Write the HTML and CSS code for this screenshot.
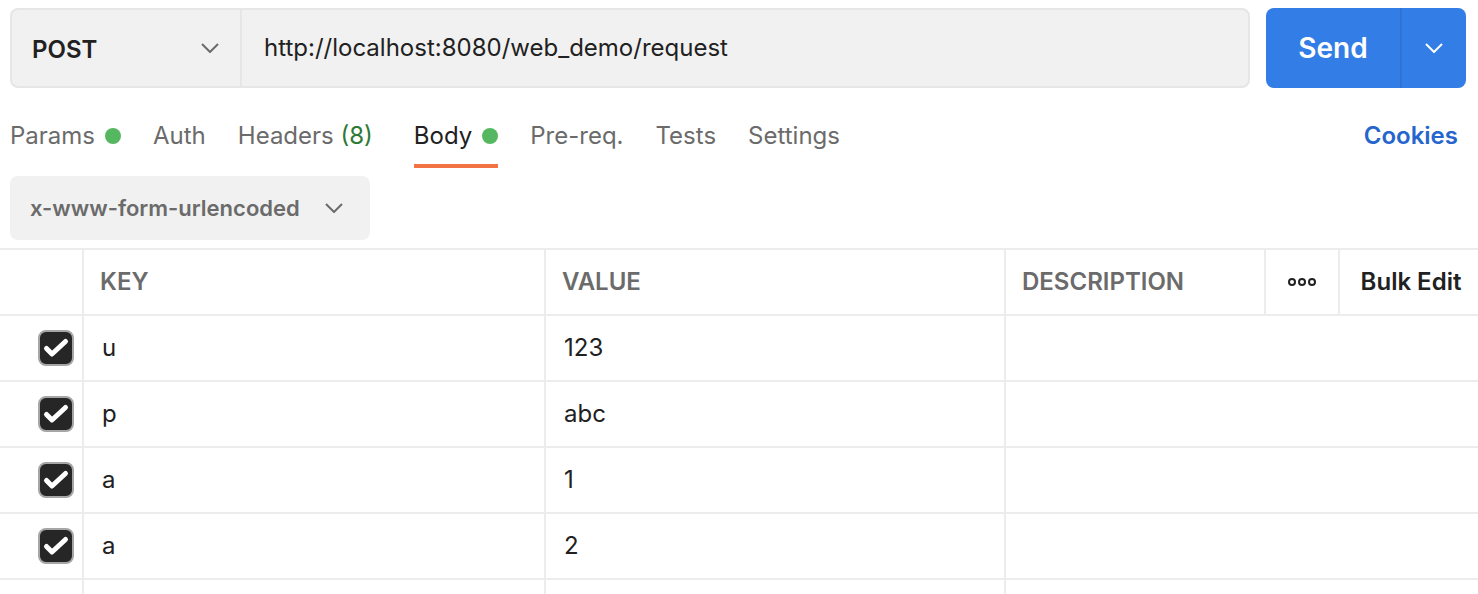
FILE: index.html
```html
<!DOCTYPE html>
<html lang="en">
<head>
<meta charset="utf-8">
<title>Request</title>
<link rel="stylesheet" href="styles.css">
</head>
<body>
<form class="url-bar">
  <div class="url-box">
    <div class="method">
      <select class="method-select" aria-label="Method"><option>POST</option><option>GET</option></select>
      <svg class="chevron" viewBox="0 0 18 10" aria-hidden="true"><path d="M1 1l8 8 8-8"/></svg>
    </div>
    <input class="url-input" type="text" aria-label="Request URL" value="http://localhost:8080/web_demo/request">
  </div>
  <div class="send-group">
    <button class="send" type="button">Send</button>
    <button class="send-more" type="button" aria-label="More send options"><svg class="chevron-light" viewBox="0 0 18 10" aria-hidden="true"><path d="M1 1l8 8 8-8"/></svg></button>
  </div>
</form>
<nav class="tabs">
  <button class="tab" type="button">Params<span class="dot"></span></button>
  <button class="tab" type="button">Auth</button>
  <button class="tab tab-headers" type="button">Headers <span class="count">(8)</span></button>
  <button class="tab tab-active" type="button">Body<span class="dot"></span></button>
  <button class="tab" type="button">Pre-req.</button>
  <button class="tab" type="button">Tests</button>
  <button class="tab" type="button">Settings</button>
  <a class="cookies" href="#">Cookies</a>
</nav>
<div class="body-type">
  <select class="type-select" aria-label="Body type"><option>x-www-form-urlencoded</option><option>form-data</option></select>
  <svg class="chevron" viewBox="0 0 18 10" aria-hidden="true"><path d="M1 1l8 8 8-8"/></svg>
</div>
<table class="params">
  <colgroup><col class="col-check"><col class="col-key"><col><col class="col-desc"><col class="col-more"><col class="col-bulk"></colgroup>
  <thead>
    <tr>
      <th></th><th>KEY</th><th>VALUE</th><th>DESCRIPTION</th>
      <th class="center"><button class="more" type="button" aria-label="More options"><svg class="dots" viewBox="0 0 30 10" aria-hidden="true"><circle cx="5" cy="5" r="3"/><circle cx="15" cy="5" r="3"/><circle cx="25" cy="5" r="3"/></svg></button></th>
      <th class="center"><button class="bulk" type="button">Bulk Edit</button></th>
    </tr>
  </thead>
  <tbody>
    <tr>
      <td><label class="check"><input class="box" type="checkbox" aria-label="Include u" checked><svg class="tick" viewBox="0 0 36 36" aria-hidden="true"><path d="M8.5 18.5L14 24 27.5 11.5"/></svg></label></td>
      <td>u</td><td>123</td><td colspan="3"></td>
    </tr>
    <tr>
      <td><label class="check"><input class="box" type="checkbox" aria-label="Include p" checked><svg class="tick" viewBox="0 0 36 36" aria-hidden="true"><path d="M8.5 18.5L14 24 27.5 11.5"/></svg></label></td>
      <td>p</td><td>abc</td><td colspan="3"></td>
    </tr>
    <tr>
      <td><label class="check"><input class="box" type="checkbox" aria-label="Include first a" checked><svg class="tick" viewBox="0 0 36 36" aria-hidden="true"><path d="M8.5 18.5L14 24 27.5 11.5"/></svg></label></td>
      <td>a</td><td>1</td><td colspan="3"></td>
    </tr>
    <tr>
      <td><label class="check"><input class="box" type="checkbox" aria-label="Include second a" checked><svg class="tick" viewBox="0 0 36 36" aria-hidden="true"><path d="M8.5 18.5L14 24 27.5 11.5"/></svg></label></td>
      <td>a</td><td>2</td><td colspan="3"></td>
    </tr>
    <tr class="row-empty"><td></td><td></td><td></td><td colspan="3"></td></tr>
  </tbody>
</table>
</body>
</html>
```
FILE: styles.css
```css
* { box-sizing: border-box; }
body {
  margin: 0;
  background: #fff;
  color: #212121;
  font-family: Inter, "Liberation Sans", sans-serif;
  font-size: 24px;
  line-height: 32px;
  font-optical-sizing: none;
}
button, select, input {
  margin: 0;
  padding: 0;
  border: 0;
  background: none;
  color: inherit;
  font: inherit;
  appearance: none;
}
.url-bar { display: flex; gap: 16px; padding: 8px 12px 0 10px; }
.url-box {
  flex: 1;
  display: flex;
  height: 80px;
  border: 2px solid #e6e6e6;
  border-radius: 8px;
  background: #f1f1f1;
  overflow: hidden;
}
.method, .body-type { display: grid; align-items: center; }
.method { width: 230px; border-right: 2px solid #e6e6e6; }
.method-select, .type-select, .method .chevron, .body-type .chevron { grid-area: 1 / 1; }
.method-select { height: 100%; padding: 4px 0 0 20px; font-weight: 600; }
.chevron, .chevron-light {
  width: 18px;
  height: 10px;
  fill: none;
  stroke: #6b6b6b;
  stroke-width: 2;
  pointer-events: none;
}
.chevron { justify-self: end; }
.method .chevron { margin-right: 21px; }
.chevron-light { stroke: #fff; }
.url-input { flex: 1; min-width: 0; padding: 0 22px; }
.send-group {
  display: flex;
  border-radius: 8px;
  background: #327de6;
  color: #fff;
  overflow: hidden;
}
.send { width: 134px; font-size: 28px; font-weight: 600; }
.send-more {
  display: flex;
  align-items: center;
  justify-content: center;
  width: 66px;
  border-left: 2px solid #2e73d8;
}
.tabs { display: flex; gap: 32px; height: 80px; padding: 0 20px 0 10px; }
.tab {
  display: flex;
  align-items: center;
  border-bottom: 4px solid transparent;
  padding-top: 20px;
  color: #6b6b6b;
  white-space: pre;
}
.tab-headers { margin-right: 9px; }
.tab-active { border-color: #f37243; color: #212121; }
.dot { width: 16px; height: 16px; margin-left: 10px; border-radius: 50%; background: #55b860; }
.count { color: #2b7a35; }
.cookies {
  margin-left: auto;
  padding-top: 32px;
  color: #2565cd;
  font-weight: 600;
  text-decoration: none;
}
.body-type {
  width: 360px;
  height: 64px;
  margin: 8px 10px;
  border-radius: 8px;
  background: #f1f1f1;
  color: #6b6b6b;
}
.type-select { height: 100%; padding-left: 20px; font-size: 22px; font-weight: 600; }
.body-type .chevron { margin-right: 27px; }
.params {
  width: 100%;
  table-layout: fixed;
  border-spacing: 0;
  border-top: 2px solid #ececec;
}
.col-check { width: 84px; }
.col-key { width: 462px; }
.col-desc { width: 260px; }
.col-more { width: 74px; }
.col-bulk { width: 138px; }
th, td {
  height: 66px;
  padding: 0 0 0 18px;
  border-right: 2px solid #ececec;
  border-bottom: 2px solid #ececec;
  text-align: left;
}
th { padding-left: 16px; color: #6b6b6b; font-weight: 600; }
th:last-child, td:last-child { border-right: 0; }
.row-empty td { height: 14px; border-bottom: 0; }
.center { padding: 0; text-align: center; }
.more { display: flex; width: 100%; justify-content: center; }
.dots { width: 30px; height: 10px; fill: none; stroke: #212121; stroke-width: 2; }
.bulk { width: 100%; padding-left: 4px; color: #212121; font-weight: 600; white-space: nowrap; }
.check { display: grid; width: 36px; height: 36px; margin-left: 20px; }
.box, .tick { grid-area: 1 / 1; width: 36px; height: 36px; }
.box { border: 2px solid #a6a6a6; border-radius: 8px; background: #fff; }
.box:checked { background: #262626; }
.tick {
  fill: none;
  stroke: #fff;
  stroke-width: 5;
  stroke-linecap: round;
  stroke-linejoin: round;
  pointer-events: none;
  visibility: hidden;
}
.box:checked + .tick { visibility: visible; }
```
